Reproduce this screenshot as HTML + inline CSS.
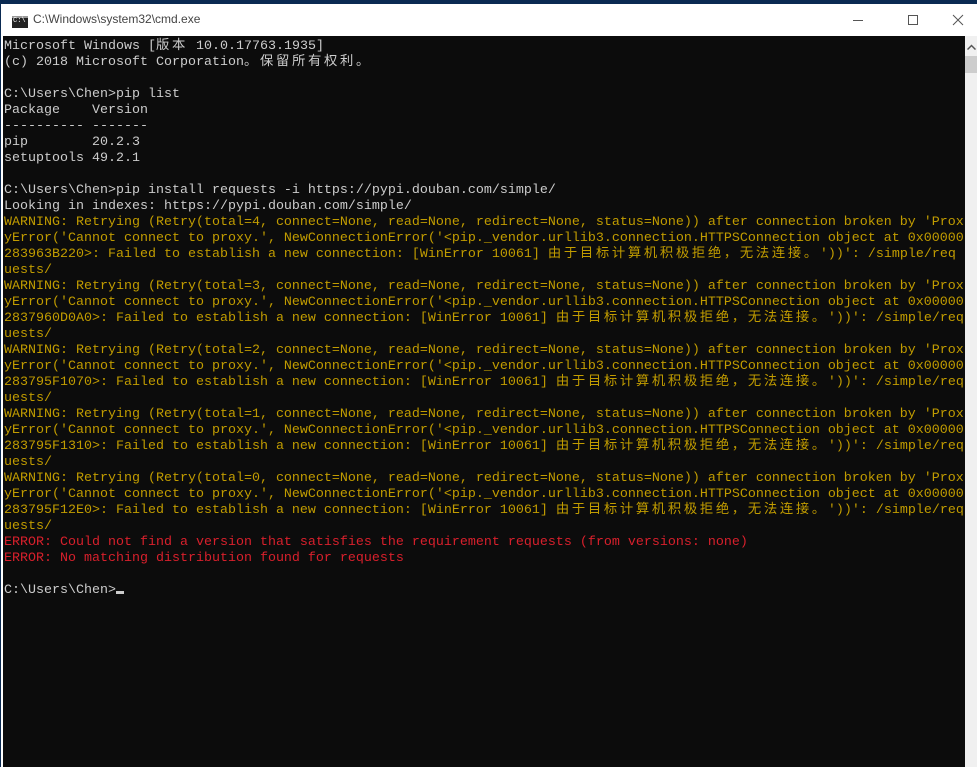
<!DOCTYPE html>
<html><head><meta charset="utf-8"><style>
html,body{margin:0;padding:0;width:977px;height:767px;overflow:hidden;background:#0a2a52}
.win{position:absolute;left:1px;top:4px;width:976px;height:763px;background:#fff}
.title{position:absolute;left:0;top:0;width:976px;height:32px;background:#fff;font-family:"Liberation Sans",sans-serif;font-size:12px;color:#000}
.title .t{position:absolute;left:32px;top:8px;color:#444}
.ico{position:absolute;left:11px;top:12px;width:16px;height:10px;background:#222;border-top:2px solid #999}
.ico:after{content:"C:\\";position:absolute;left:1px;top:-1px;font-size:7px;color:#fff;font-family:"Liberation Mono",monospace}
.con{position:absolute;left:2px;top:32px;width:962px;height:731px;background:#0c0c0c;overflow:hidden}
pre{margin:0;padding:3px 0 0 1px;font-family:"Liberation Mono","Noto Sans CJK SC",monospace;font-size:13.33px;line-height:16px;color:#cccccc;white-space:pre}
.c{letter-spacing:2.67px}
.y{color:#c19c00}.r{color:#d8202c}
.sb{position:absolute;left:964px;top:32px;width:12px;height:731px;background:#f0f0f0}
.th{position:absolute;left:0;top:20px;width:12px;height:17px;background:#cdcdcd}
.cur{display:inline-block;width:8px;height:3px;background:#ccc;vertical-align:-1px}
</style></head><body>
<div class="win">
<div class="title"><div class="ico"></div><span class="t">C:\Windows\system32\cmd.exe</span>
<svg style="position:absolute;left:850px;top:10px" width="120" height="14"><line x1="2" y1="6.5" x2="12" y2="6.5" stroke="#555"/><rect x="57.5" y="1.5" width="9" height="9" fill="none" stroke="#555"/><path d="M102 1L112 11M112 1L102 11" stroke="#555"/></svg>
</div>
<div class="con"><pre>Microsoft Windows [<span class="c">版本</span> 10.0.17763.1935]
(c) 2018 Microsoft Corporation<span class="c">。保留所有权利。</span>

C:\Users\Chen&gt;pip list
Package    Version
---------- -------
pip        20.2.3
setuptools 49.2.1

C:\Users\Chen&gt;pip install requests -i https://pypi.douban.com/simple/
Looking in indexes: https://pypi.douban.com/simple/
<span class="y">WARNING: Retrying (Retry(total=4, connect=None, read=None, redirect=None, status=None)) after connection broken by 'Prox
yError('Cannot connect to proxy.', NewConnectionError('&lt;pip._vendor.urllib3.connection.HTTPSConnection object at 0x00000
283963B220&gt;: Failed to establish a new connection: [WinError 10061] <span class="c">由于目标计算机积极拒绝，无法连接。</span>'))': /simple/req
uests/
WARNING: Retrying (Retry(total=3, connect=None, read=None, redirect=None, status=None)) after connection broken by 'Prox
yError('Cannot connect to proxy.', NewConnectionError('&lt;pip._vendor.urllib3.connection.HTTPSConnection object at 0x00000
2837960D0A0&gt;: Failed to establish a new connection: [WinError 10061] <span class="c">由于目标计算机积极拒绝，无法连接。</span>'))': /simple/req
uests/
WARNING: Retrying (Retry(total=2, connect=None, read=None, redirect=None, status=None)) after connection broken by 'Prox
yError('Cannot connect to proxy.', NewConnectionError('&lt;pip._vendor.urllib3.connection.HTTPSConnection object at 0x00000
283795F1070&gt;: Failed to establish a new connection: [WinError 10061] <span class="c">由于目标计算机积极拒绝，无法连接。</span>'))': /simple/req
uests/
WARNING: Retrying (Retry(total=1, connect=None, read=None, redirect=None, status=None)) after connection broken by 'Prox
yError('Cannot connect to proxy.', NewConnectionError('&lt;pip._vendor.urllib3.connection.HTTPSConnection object at 0x00000
283795F1310&gt;: Failed to establish a new connection: [WinError 10061] <span class="c">由于目标计算机积极拒绝，无法连接。</span>'))': /simple/req
uests/
WARNING: Retrying (Retry(total=0, connect=None, read=None, redirect=None, status=None)) after connection broken by 'Prox
yError('Cannot connect to proxy.', NewConnectionError('&lt;pip._vendor.urllib3.connection.HTTPSConnection object at 0x00000
283795F12E0&gt;: Failed to establish a new connection: [WinError 10061] <span class="c">由于目标计算机积极拒绝，无法连接。</span>'))': /simple/req
uests/</span>
<span class="r">ERROR: Could not find a version that satisfies the requirement requests (from versions: none)
ERROR: No matching distribution found for requests</span>

C:\Users\Chen&gt;<span class="cur"></span></pre></div>
<div class="sb"><svg style="position:absolute;left:2px;top:8px" width="9" height="6"><path d="M0.5 5.5L4.5 1.5L8.5 5.5" fill="none" stroke="#555" stroke-width="1.5"/></svg><div class="th"></div></div>
</div>
</body></html>
